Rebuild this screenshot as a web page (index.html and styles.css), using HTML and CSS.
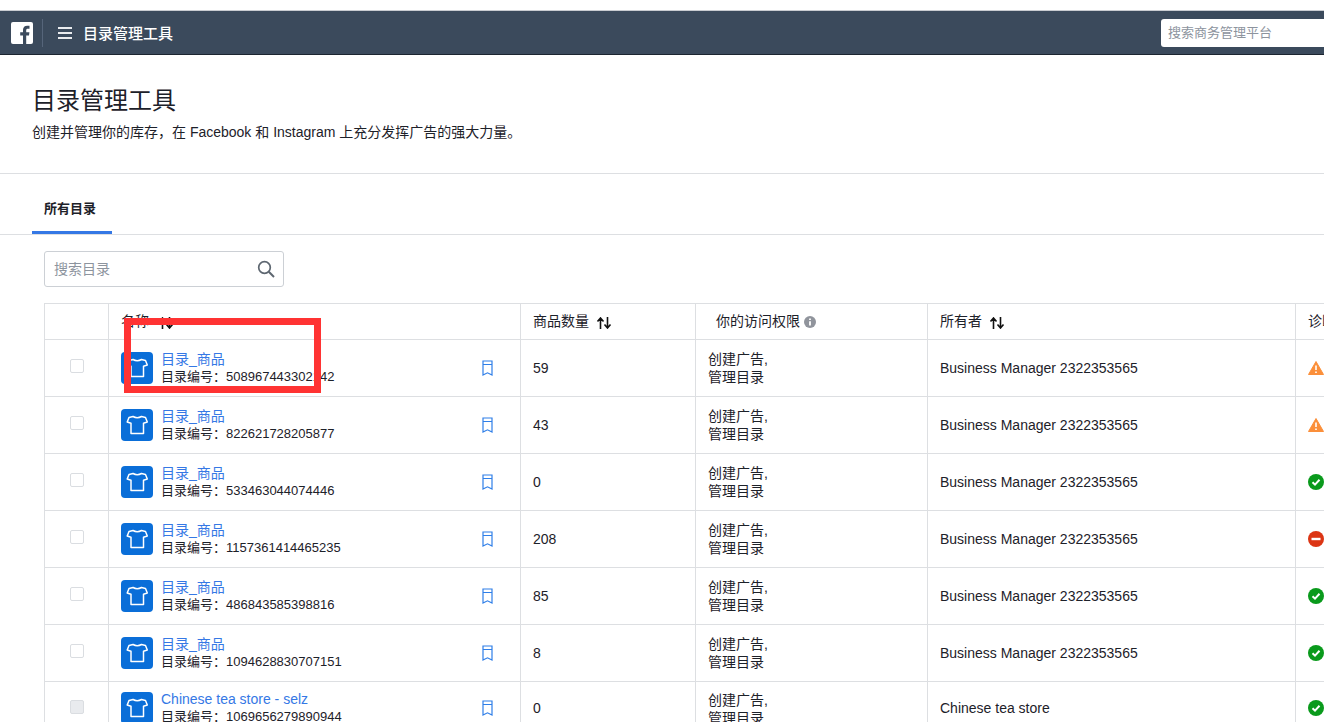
FILE: index.html
```html
<!DOCTYPE html>
<html lang="zh-CN">
<head>
  <meta charset="UTF-8">
  <meta name="viewport" content="width=device-width, initial-scale=1.0">
  <title>目录管理工具</title>
  <link rel="stylesheet" href="styles.css">
</head>
<body>
  <svg class="defs" width="0" height="0">
    <symbol id="shirt" viewBox="0 0 32 32">
      <path d="M12 7.5 L8 8.5 L6.2 13 L10 14.2 L10 24.5 L22.5 24.5 L22.5 14.2 L26.3 13 L24.5 8.5 L20.5 7.5 Q16.2 10 12 7.5 Z" fill="none" stroke="#fff" stroke-width="1.5" stroke-linejoin="round"/>
    </symbol>
    <symbol id="bookmark" viewBox="0 0 11 16">
      <path d="M1 15 V1 H10 V15 L5.5 12.8 Z M1 4.5 H10" fill="none" stroke="#2f7fe8" stroke-width="1.2"/>
    </symbol>
    <symbol id="sort" viewBox="0 0 16 12">
      <path d="M4.5 12 V2 M1.5 4.5 L4.5 1 L7.5 4.5 M11.5 0 V10 M8.5 7.5 L11.5 11 L14.5 7.5" fill="none" stroke="#111" stroke-width="1.6"/>
    </symbol>
    <symbol id="warn" viewBox="0 0 16 16">
      <path d="M8 1.5 L15.5 14.5 H0.5 Z" fill="#fb8f3a" stroke="#fb8f3a" stroke-width="1" stroke-linejoin="round"/>
      <path d="M8 5.5 V10 M8 11.5 V13" stroke="#fff" stroke-width="1.6"/>
    </symbol>
    <symbol id="ok" viewBox="0 0 16 16">
      <circle cx="8" cy="8" r="8" fill="#0a9a1c"/>
      <path d="M4.5 8.2 L7 10.6 L11.5 5.8" fill="none" stroke="#fff" stroke-width="2"/>
    </symbol>
    <symbol id="stop" viewBox="0 0 16 16">
      <circle cx="8" cy="8" r="8" fill="#dc3514"/>
      <rect x="3.5" y="6.8" width="9" height="2.4" fill="#fff"/>
    </symbol>
  </svg>

  <header class="topbar">
    <svg class="fb-logo" width="22" height="22" viewBox="0 0 22 22">
      <rect width="22" height="22" rx="2" fill="#fff"/>
      <path d="M15.2 22 V13.6 H18 L18.4 10.3 H15.2 V8.3 C15.2 7.3 15.5 6.7 16.9 6.7 H18.5 V3.8 C18.2 3.8 17.3 3.7 16.1 3.7 C13.7 3.7 12 5.2 12 7.9 V10.3 H9.2 V13.6 H12 V22 Z" fill="#3b4a5c"/>
    </svg>
    <span class="topbar-sep"></span>
    <span class="burger"><i></i><i></i><i></i></span>
    <span class="topbar-title">目录管理工具</span>
    <div class="global-search">搜索商务管理平台</div>
  </header>

  <section class="page-head">
    <h1>目录管理工具</h1>
    <p>创建并管理你的库存，在 Facebook 和 Instagram 上充分发挥广告的强大力量。</p>
  </section>

  <nav class="tabs">
    <a class="tab active">所有目录</a>
  </nav>

  <main class="content">
    <div class="search-box">
      <span>搜索目录</span>
      <svg width="18" height="18" viewBox="0 0 18 18">
        <circle cx="7.5" cy="7.5" r="5.8" fill="none" stroke="#5d6670" stroke-width="1.7"/>
        <path d="M11.8 11.8 L17 17" stroke="#5d6670" stroke-width="2"/>
      </svg>
    </div>

    <table class="catalogs">
      <colgroup>
        <col class="c-check"><col class="c-name"><col class="c-count"><col class="c-access"><col class="c-owner"><col class="c-diag">
      </colgroup>
      <thead>
        <tr>
          <th></th>
          <th>名称 <svg class="sort sort-name"><use href="#sort"/></svg></th>
          <th>商品数量 <svg class="sort"><use href="#sort"/></svg></th>
          <th class="th-access">你的访问权限
            <svg class="info" width="12" height="12" viewBox="0 0 12 12">
              <circle cx="6" cy="6" r="6" fill="#90949c"/>
              <path d="M6 5.2 V9.5 M6 2.4 V4" stroke="#fff" stroke-width="1.8"/>
            </svg>
          </th>
          <th>所有者 <svg class="sort"><use href="#sort"/></svg></th>
          <th>诊断</th>
        </tr>
      </thead>
      <tbody>
        <tr>
          <td><span class="check"></span></td>
          <td><div class="name-cell"><svg class="cat-icon"><use href="#shirt"/></svg><div class="cat-text"><a>目录_商品</a><div>目录编号：508967443302142</div></div><svg class="mark"><use href="#bookmark"/></svg></div></td>
          <td>59</td>
          <td class="access">创建广告,<br>管理目录</td>
          <td>Business Manager 2322353565</td>
          <td><svg class="status"><use href="#warn"/></svg></td>
        </tr>
        <tr>
          <td><span class="check"></span></td>
          <td><div class="name-cell"><svg class="cat-icon"><use href="#shirt"/></svg><div class="cat-text"><a>目录_商品</a><div>目录编号：822621728205877</div></div><svg class="mark"><use href="#bookmark"/></svg></div></td>
          <td>43</td>
          <td class="access">创建广告,<br>管理目录</td>
          <td>Business Manager 2322353565</td>
          <td><svg class="status"><use href="#warn"/></svg></td>
        </tr>
        <tr>
          <td><span class="check"></span></td>
          <td><div class="name-cell"><svg class="cat-icon"><use href="#shirt"/></svg><div class="cat-text"><a>目录_商品</a><div>目录编号：533463044074446</div></div><svg class="mark"><use href="#bookmark"/></svg></div></td>
          <td>0</td>
          <td class="access">创建广告,<br>管理目录</td>
          <td>Business Manager 2322353565</td>
          <td><svg class="status"><use href="#ok"/></svg></td>
        </tr>
        <tr>
          <td><span class="check"></span></td>
          <td><div class="name-cell"><svg class="cat-icon"><use href="#shirt"/></svg><div class="cat-text"><a>目录_商品</a><div>目录编号：1157361414465235</div></div><svg class="mark"><use href="#bookmark"/></svg></div></td>
          <td>208</td>
          <td class="access">创建广告,<br>管理目录</td>
          <td>Business Manager 2322353565</td>
          <td><svg class="status"><use href="#stop"/></svg></td>
        </tr>
        <tr>
          <td><span class="check"></span></td>
          <td><div class="name-cell"><svg class="cat-icon"><use href="#shirt"/></svg><div class="cat-text"><a>目录_商品</a><div>目录编号：486843585398816</div></div><svg class="mark"><use href="#bookmark"/></svg></div></td>
          <td>85</td>
          <td class="access">创建广告,<br>管理目录</td>
          <td>Business Manager 2322353565</td>
          <td><svg class="status"><use href="#ok"/></svg></td>
        </tr>
        <tr>
          <td><span class="check"></span></td>
          <td><div class="name-cell"><svg class="cat-icon"><use href="#shirt"/></svg><div class="cat-text"><a>目录_商品</a><div>目录编号：1094628830707151</div></div><svg class="mark"><use href="#bookmark"/></svg></div></td>
          <td>8</td>
          <td class="access">创建广告,<br>管理目录</td>
          <td>Business Manager 2322353565</td>
          <td><svg class="status"><use href="#ok"/></svg></td>
        </tr>
        <tr class="row-last">
          <td><span class="check disabled"></span></td>
          <td><div class="name-cell"><svg class="cat-icon"><use href="#shirt"/></svg><div class="cat-text"><a>Chinese tea store - selz</a><div>目录编号：1069656279890944</div></div><svg class="mark"><use href="#bookmark"/></svg></div></td>
          <td>0</td>
          <td class="access">创建广告,<br>管理目录</td>
          <td>Chinese tea store</td>
          <td><svg class="status"><use href="#ok"/></svg></td>
        </tr>
      </tbody>
    </table>
  </main>

  <div class="red-mark"></div>
</body>
</html>
```

FILE: styles.css
```css
html, body {
  margin: 0;
  height: 722px;
  overflow: hidden;
}
body {
  font-family: "Liberation Sans", "Noto Sans CJK SC", sans-serif;
  font-size: 14px;
  color: #1d2129;
  background: #fff;
  padding-top: 10px;
  box-sizing: border-box;
  position: relative;
}
.defs {
  position: absolute;
}
.topbar {
  height: 45px;
  background: #3b4a5c;
  border-top: 1px solid #c9ccd1;
  border-bottom: 1px solid #1c2530;
  box-sizing: border-box;
  display: flex;
  align-items: center;
  padding-left: 11px;
  color: #fff;
}
.fb-logo {
  flex: none;
}
.topbar-sep {
  width: 1px;
  height: 28px;
  background: #56657a;
  margin-left: 9px;
}
.burger {
  width: 14px;
  margin-left: 15px;
  display: flex;
  flex-direction: column;
  gap: 3px;
}
.burger i {
  display: block;
  height: 2px;
  background: #e9ebee;
}
.topbar-title {
  margin-left: 11px;
  font-size: 15px;
  font-weight: 500;
}
.global-search {
  margin-left: auto;
  width: 163px;
  height: 28px;
  line-height: 28px;
  background: #fff;
  border-radius: 3px 0 0 3px;
  padding-left: 7px;
  box-sizing: border-box;
  font-size: 13px;
  color: #8d949e;
}
.page-head {
  height: 119px;
  padding: 29px 0 0 32px;
  box-sizing: border-box;
  border-bottom: 1px solid #dddfe2;
}
.page-head h1 {
  margin: 0;
  font-size: 24px;
  font-weight: 400;
  line-height: 34px;
}
.page-head p {
  margin: 5px 0 0;
  line-height: 18px;
}
.tabs {
  height: 61px;
  padding-left: 32px;
  box-sizing: border-box;
  border-bottom: 1px solid #dddfe2;
  display: flex;
}
.tab {
  width: 80px;
  height: 60px;
  box-sizing: border-box;
  padding: 26px 0 0 12px;
  font-size: 13px;
  font-weight: 700;
  border-bottom: 3px solid #3578e5;
  line-height: 18px;
}
.content {
  padding: 16px 0 0 44px;
}
.search-box {
  width: 240px;
  height: 36px;
  box-sizing: border-box;
  border: 1px solid #ccd0d5;
  border-radius: 3px;
  display: flex;
  align-items: center;
  justify-content: space-between;
  padding: 0 8px 0 9px;
  color: #8d949e;
}
.search-box span {
  padding-bottom: 2px;
}
.catalogs {
  margin-top: 16px;
  width: 1380px;
  table-layout: fixed;
  border-collapse: collapse;
}
.c-check { width: 64px; }
.c-name { width: 412px; }
.c-count { width: 175px; }
.c-access { width: 232px; }
.c-owner { width: 368px; }
.c-diag { width: 129px; }
.catalogs th,
.catalogs td {
  border: 1px solid #dddfe2;
  padding: 0 12px;
  text-align: left;
  font-weight: 400;
}
.catalogs th {
  height: 32px;
  padding-bottom: 3px;
  white-space: nowrap;
}
.catalogs td {
  height: 57px;
  box-sizing: border-box;
}
.catalogs .th-access {
  padding-left: 20px;
}
.sort {
  width: 16px;
  height: 12px;
  margin-left: 3px;
  vertical-align: -3px;
}
.sort-name {
  margin-left: 5px;
}
.info {
  vertical-align: -2px;
  margin-left: 0;
}
.check {
  display: block;
  width: 12px;
  height: 12px;
  margin: -4px auto 0;
  border: 1px solid #dadde1;
  border-radius: 2px;
}
.check.disabled {
  background: #e9ebee;
}
.name-cell {
  display: flex;
  align-items: center;
}
.cat-icon {
  flex: none;
  width: 32px;
  height: 32px;
  background: #0a6ed8;
  border-radius: 4px;
  margin-bottom: 1px;
}
.cat-text {
  margin-left: 8px;
  line-height: 18px;
  white-space: nowrap;
  font-size: 13px;
  color: #1d2129;
}
.cat-text a {
  display: block;
  font-size: 14px;
  color: #3578e5;
}
.mark {
  width: 11px;
  height: 16px;
  margin-left: auto;
  margin-right: 15px;
}
.access {
  line-height: 18px;
}
.status {
  display: block;
  width: 16px;
  height: 16px;
}
.catalogs .row-last td {
  vertical-align: top;
  padding-top: 18px;
}
.row-last .check {
  margin-top: 0;
}
.row-last .name-cell {
  margin-top: -10px;
}
.catalogs .row-last .access {
  padding-top: 9px;
}
.red-mark {
  position: absolute;
  left: 124px;
  top: 318px;
  width: 197px;
  height: 75px;
  box-sizing: border-box;
  border: 7px solid #ff3333;
}
```
